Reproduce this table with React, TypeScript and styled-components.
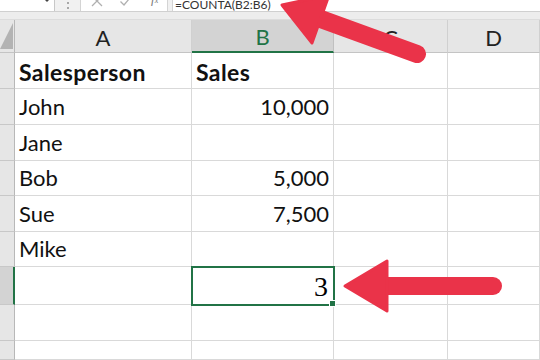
import React from "react";
import styled, { createGlobalStyle, css } from "styled-components";

const GlobalStyle = createGlobalStyle`
  html, body {
    margin: 0;
    padding: 0;
    background: #ffffff;
    overflow: hidden;
  }
  body {
    font-family: Lato, "Noto Sans", sans-serif;
  }
`;

const GREEN = "#217346";
const GRID = "#d9d9d9";

const Page = styled.div`
  position: relative;
  width: 540px;
  height: 360px;
  overflow: hidden;
  background: #ffffff;
`;

/* ---------- formula bar ---------- */

const Toolbar = styled.div`
  display: flex;
  align-items: flex-end;
  height: 12px;
  overflow: hidden;
  background: #f1f1f1;
  border-bottom: 1px solid #d0d0d0;
  box-sizing: border-box;
`;

const NameBox = styled.div`
  position: relative;
  width: 55px;
  height: 26px;
  flex: none;
  background: #ffffff;
  border-right: 1px solid #c8c8c8;
  box-sizing: border-box;
  display: flex;
  justify-content: flex-end;
  align-items: flex-end;
  padding: 0 4px 9px 0;
`;

const Caret = styled.span`
  width: 0;
  height: 0;
  border-left: 3px solid transparent;
  border-right: 3px solid transparent;
  border-top: 3px solid #444;
`;

const Gutter = styled.div`
  width: 25px;
  height: 12px;
  flex: none;
  display: flex;
  flex-direction: column;
  align-items: center;
  justify-content: center;
  gap: 3px;
`;

const Dot = styled.span`
  width: 2px;
  height: 2px;
  background: #a8a8a8;
`;

const ButtonBox = styled.div`
  width: 88px;
  height: 26px;
  flex: none;
  background: #ffffff;
  border-left: 1px solid #d4d4d4;
  border-right: 1px solid #d4d4d4;
  box-sizing: border-box;
  display: flex;
  align-items: flex-end;
  padding: 0 0 3px 9px;
  gap: 15px;
`;

const BarIcon = styled.svg`
  width: 14px;
  height: 14px;
  flex: none;
  stroke: #b0b0b0;
  fill: none;
  stroke-width: 1.3;
`;

const Fx = styled.span`
  font-family: "Liberation Serif", serif;
  font-style: italic;
  font-size: 13px;
  line-height: 14px;
  color: #7a7a7a;
  margin-left: 3px;
  small {
    font-size: 8px;
  }
`;

const FormulaInput = styled.div`
  flex: 1;
  height: 26px;
  margin-left: 4px;
  background: #ffffff;
  border-left: 1px solid #d4d4d4;
  box-sizing: border-box;
  display: flex;
  align-items: flex-end;
  padding: 0 0 0 2px;
  font-family: Lato, "Noto Sans", sans-serif;
  font-size: 12px;
  line-height: 13px;
  color: #333;
`;

const Band = styled.div`
  height: 7px;
  background: #ededed;
  border-bottom: 1px solid #dcdcdc;
`;

/* ---------- sheet ---------- */

const Sheet = styled.div`
  display: grid;
  grid-template-columns: 15px 177px 142px 114px 1fr;
  grid-template-rows: 33px 36px 36px 36px 35px 36px 35px 38px 36px 1fr;
  height: 340px;
`;

const Corner = styled.div`
  position: relative;
  background: #e6e6e6;
  border-right: 1px solid #b8b8b8;
  border-bottom: 1px solid #c4c4c4;
  box-sizing: border-box;
  display: flex;
  align-items: flex-end;
  padding: 0 1px 3px 0;
`;

const ColHead = styled.div<{ $active?: boolean }>`
  background: ${(p) => (p.$active ? "#d3d3d3" : "#e6e6e6")};
  border-right: 1px solid ${(p) => (p.$active ? "#c0c0c0" : "#d0d0d0")};
  border-bottom: ${(p) =>
    p.$active ? `2px solid ${GREEN}` : "1px solid #c4c4c4"};
  box-sizing: border-box;
  display: flex;
  justify-content: center;
  align-items: center;
  padding-top: 2px;
  font-size: 22px;
  color: ${(p) => (p.$active ? GREEN : "#222")};
`;

const RowHead = styled.div<{ $active?: boolean }>`
  background: ${(p) => (p.$active ? "#d3d3d3" : "#e6e6e6")};
  border-right: ${(p) =>
    p.$active ? `2px solid ${GREEN}` : "1px solid #b8b8b8"};
  border-bottom: 1px solid #c8c8c8;
  box-sizing: border-box;
`;

const Cell = styled.div<{
  $bold?: boolean;
  $right?: boolean;
  $selected?: boolean;
  $serif?: boolean;
}>`
  position: relative;
  border-right: 1px solid ${GRID};
  border-bottom: 1px solid ${GRID};
  box-sizing: border-box;
  display: flex;
  align-items: flex-end;
  justify-content: ${(p) => (p.$right ? "flex-end" : "flex-start")};
  padding: 0 4px 4px 4px;
  font-size: 22px;
  line-height: 26px;
  color: #111;
  white-space: nowrap;
  ${(p) =>
    p.$bold &&
    css`
      font-weight: 700;
      font-size: 23px;
      letter-spacing: 0.4px;
      padding-bottom: 3px;
    `}
  ${(p) =>
    p.$serif &&
    css`
      font-family: "Liberation Serif", serif;
      font-size: 28px;
      line-height: 30px;
      padding-bottom: 2px;
      padding-right: 5px;
      color: #000;
    `}
  ${(p) =>
    p.$selected &&
    css`
      z-index: 1;
      outline: 2px solid ${GREEN};
      outline-offset: -1px;
      &::after {
        content: "";
        position: absolute;
        right: -3px;
        bottom: -3px;
        width: 5px;
        height: 5px;
        background: ${GREEN};
        border: 1px solid #ffffff;
      }
    `}
`;

/* ---------- callout arrows ---------- */

const Overlay = styled.svg`
  position: absolute;
  left: 0;
  top: 0;
  width: 540px;
  height: 360px;
  pointer-events: none;
  z-index: 5;
`;

const RED = "#ea3349";

type Row = {
  a: string;
  b: string;
  bold?: boolean;
  selected?: boolean;
};

const rows: Row[] = [
  { a: "Salesperson", b: "Sales", bold: true },
  { a: "John", b: "10,000" },
  { a: "Jane", b: "" },
  { a: "Bob", b: "5,000" },
  { a: "Sue", b: "7,500" },
  { a: "Mike", b: "" },
  { a: "", b: "3", selected: true },
  { a: "", b: "" },
  { a: "", b: "" },
];

export default function App() {
  return (
    <Page>
      <GlobalStyle />
      <Toolbar>
        <NameBox>
          <Caret />
        </NameBox>
        <Gutter>
          <Dot />
          <Dot />
        </Gutter>
        <ButtonBox>
          <BarIcon viewBox="0 0 14 14">
            <path d="M2 2 L12 12 M12 2 L2 12" />
          </BarIcon>
          <BarIcon viewBox="0 0 14 14">
            <path d="M1.5 7.5 L5 11 L12.5 2" />
          </BarIcon>
          <Fx>
            f<small>x</small>
          </Fx>
        </ButtonBox>
        <FormulaInput>=COUNTA(B2:B6)</FormulaInput>
      </Toolbar>
      <Band />
      <Sheet>
        <Corner>
          <svg width="13" height="28" viewBox="0 0 13 28">
            <polygon points="0,28 13,2 13,28" fill="#b3b3b3" />
          </svg>
        </Corner>
        <ColHead>A</ColHead>
        <ColHead $active>B</ColHead>
        <ColHead>C</ColHead>
        <ColHead>D</ColHead>
        {rows.map((r, i) => (
          <React.Fragment key={i}>
            <RowHead $active={r.selected} />
            <Cell $bold={r.bold}>{r.a}</Cell>
            <Cell
              $bold={r.bold}
              $right={!r.bold}
              $selected={r.selected}
              $serif={r.selected}
            >
              {r.b}
            </Cell>
            <Cell />
            <Cell />
          </React.Fragment>
        ))}
      </Sheet>
      <Overlay viewBox="0 0 540 360">
        {/* arrow pointing at the formula */}
        <line
          x1="417"
          y1="54"
          x2="318"
          y2="18"
          stroke={RED}
          strokeWidth="18"
          strokeLinecap="round"
        />
        <polygon
          points="282,5 312,43 329,-5"
          fill={RED}
          stroke={RED}
          strokeWidth="3"
          strokeLinejoin="round"
        />
        {/* arrow pointing at the result */}
        <line
          x1="493"
          y1="286"
          x2="384"
          y2="286"
          stroke={RED}
          strokeWidth="18"
          strokeLinecap="round"
        />
        <polygon
          points="345,286 387,261 387,311"
          fill={RED}
          stroke={RED}
          strokeWidth="3"
          strokeLinejoin="round"
        />
      </Overlay>
    </Page>
  );
}
